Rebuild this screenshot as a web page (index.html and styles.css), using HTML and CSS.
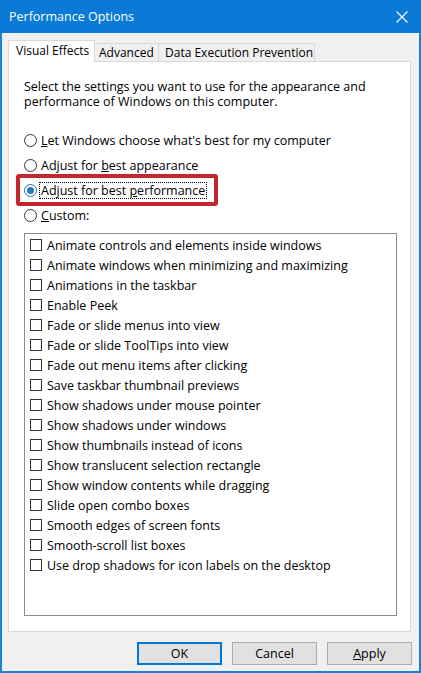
FILE: index.html
```html
<!DOCTYPE html>
<html lang="en">
<head>
<meta charset="utf-8">
<title>Performance Options</title>
<link rel="stylesheet" href="styles.css">
</head>
<body>
<div class="window">
  <div class="titlebar">
    <span class="title">Performance Options</span>
    <svg class="close" width="12" height="12" viewBox="0 0 12 12"><path d="M0.5 0.5 L11.5 11.5 M11.5 0.5 L0.5 11.5" stroke="#fff" stroke-width="1.1" fill="none"/></svg>
  </div>
  <div class="frame">
    <div class="tabs">
      <div class="tab tab-visual active">Visual Effects</div>
      <div class="tab tab-advanced">Advanced</div>
      <div class="tab tab-dep">Data Execution Prevention</div>
    </div>
    <div class="panel">
      <p class="intro"><span class="line">Select the settings you want to use for the appearance and</span><span class="line">performance of Windows on this computer.</span></p>
      <div class="radios">
        <div class="radio"><span class="circle"></span><span class="rlabel"><u>L</u>et Windows choose what's best for my computer</span></div>
        <div class="radio"><span class="circle"></span><span class="rlabel">Adjust for <u>b</u>est appearance</span></div>
        <div class="radio selected"><span class="circle"></span><span class="rlabel focus">Adjust for best <u>p</u>erformance</span></div>
        <div class="radio"><span class="circle"></span><span class="rlabel"><u>C</u>ustom:</span></div>
      </div>
      <div class="listbox">
        <div class="item"><span class="check"></span>Animate controls and elements inside windows</div>
        <div class="item"><span class="check"></span>Animate windows when minimizing and maximizing</div>
        <div class="item"><span class="check"></span>Animations in the taskbar</div>
        <div class="item"><span class="check"></span>Enable Peek</div>
        <div class="item"><span class="check"></span>Fade or slide menus into view</div>
        <div class="item"><span class="check"></span>Fade or slide ToolTips into view</div>
        <div class="item"><span class="check"></span>Fade out menu items after clicking</div>
        <div class="item"><span class="check"></span>Save taskbar thumbnail previews</div>
        <div class="item"><span class="check"></span>Show shadows under mouse pointer</div>
        <div class="item"><span class="check"></span>Show shadows under windows</div>
        <div class="item"><span class="check"></span>Show thumbnails instead of icons</div>
        <div class="item"><span class="check"></span>Show translucent selection rectangle</div>
        <div class="item"><span class="check"></span>Show window contents while dragging</div>
        <div class="item"><span class="check"></span>Slide open combo boxes</div>
        <div class="item"><span class="check"></span>Smooth edges of screen fonts</div>
        <div class="item"><span class="check"></span>Smooth-scroll list boxes</div>
        <div class="item"><span class="check"></span>Use drop shadows for icon labels on the desktop</div>
      </div>
    </div>
    <div class="buttons">
      <button class="btn default">OK</button>
      <button class="btn">Cancel</button>
      <button class="btn"><u>A</u>pply</button>
    </div>
  </div>
</div>
</body>
</html>
```
FILE: styles.css
```css
* { box-sizing: border-box; }
html, body { margin: 0; padding: 0; }
body {
  font-family: "Open Sans", "Noto Sans", "Liberation Sans", sans-serif;
  font-size: 12.5px;
  color: #000;
  background: #fff;
}
.window {
  width: 421px;
  height: 673px;
  display: flex;
  flex-direction: column;
  background: #f0f0f0;
}
.titlebar {
  height: 33px;
  flex: none;
  background: #0a7ad6;
  color: #fff;
  display: flex;
  align-items: center;
  justify-content: space-between;
  padding: 0 13px 1px 9px;
}
.title { font-size: 12.5px; }
.close { display: block; margin-top: 1px; }
.frame {
  flex: 1;
  display: flex;
  flex-direction: column;
  border: 2px solid #1a82d6;
  border-top: 0;
  padding: 7px 8px 6px 6px;
}
.tabs {
  height: 22px;
  display: flex;
  align-items: flex-end;
  flex: none;
}
.tab {
  height: 19px;
  border: 1px solid #d9d9d9;
  border-bottom: 0;
  background: #f0f0f0;
  font-size: 12px;
  line-height: 17px;
  white-space: nowrap;
}
.tab + .tab { border-left: 0; }
.tab.active {
  height: 22px;
  background: #fff;
  position: relative;
  z-index: 1;
  line-height: 19px;
}
.tab-visual { width: 87px; padding-left: 7px; }
.tab-advanced { width: 64px; padding-left: 4px; }
.tab-dep { width: 156px; padding-left: 6px; }
.panel {
  flex: 1;
  margin-top: -1px;
  background: #fff;
  border: 1px solid #d9d9d9;
  padding: 17px 0 0 15px;
  display: flex;
  flex-direction: column;
}
.intro {
  margin: 0;
  white-space: nowrap;
}
.line {
  display: block;
  height: 15px;
  line-height: 15px;
}
.radios {
  margin-top: 19px;
  display: flex;
  flex-direction: column;
}
.radio {
  height: 25px;
  width: fit-content;
  display: flex;
  align-items: center;
  position: relative;
  white-space: nowrap;
}
.circle {
  width: 13px;
  height: 13px;
  border: 1px solid #333;
  border-radius: 50%;
  background: #fff;
  margin-right: 2px;
  flex: none;
  display: flex;
  align-items: center;
  justify-content: center;
}
.selected .circle { border-color: #2a6db0; }
.selected .circle::before {
  content: "";
  width: 7px;
  height: 7px;
  border-radius: 50%;
  background: #2a78c0;
}
.rlabel {
  padding: 0 1px;
  line-height: 15px;
  border: 1px dotted transparent;
}
.rlabel.focus { border-color: #000; }
.selected::after {
  content: "";
  position: absolute;
  top: -4px;
  bottom: -3px;
  left: -8px;
  right: -11px;
  border: 4px solid #c4262e;
  border-radius: 3px;
}
.listbox {
  margin-top: 5px;
  width: 373px;
  height: 383px;
  border: 1px solid #8c8c8c;
  padding: 1px 0 0 5px;
  flex: none;
}
.item {
  height: 20px;
  display: flex;
  align-items: center;
  white-space: nowrap;
}
.check {
  width: 12px;
  height: 12px;
  border: 1px solid #333;
  background: #fff;
  margin-right: 5px;
  flex: none;
}
.buttons {
  flex: none;
  margin-top: 10px;
  height: 23px;
  display: flex;
  justify-content: flex-end;
  gap: 10px;
  margin-right: -1px;
}
.btn {
  width: 85px;
  height: 23px;
  border: 1px solid #adadad;
  background: #e1e1e1;
  font-family: inherit;
  font-size: 12.5px;
  color: #000;
  padding: 0;
}
.btn.default {
  border-color: #0078d7;
  box-shadow: inset 0 0 0 1px #0078d7;
}
```
